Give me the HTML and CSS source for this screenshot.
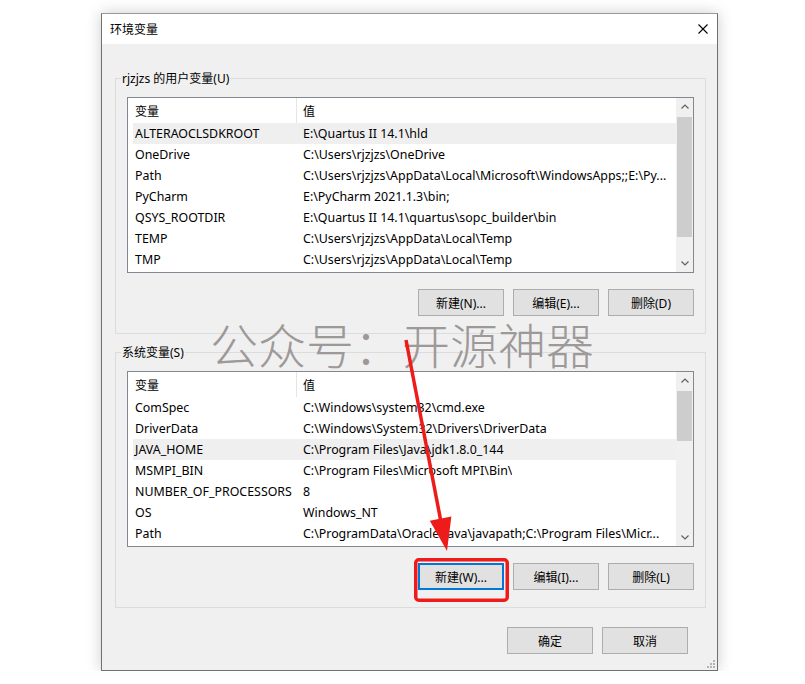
FILE: index.html
```html
<!DOCTYPE html>
<html lang="zh-CN">
<head>
    <meta charset="UTF-8">
    <title>环境变量</title>
    <link rel="stylesheet" href="styles.css">
</head>
<body>
    <div class="window">
        <div class="titlebar">
            <span>环境变量</span>
            <svg class="close" width="10" height="10" viewBox="0 0 10 10">
                <path d="M0.5 0.5 L9.5 9.5 M9.5 0.5 L0.5 9.5" stroke="#000" stroke-width="1.1" fill="none"/>
            </svg>
        </div>

        <div class="client">
            <!-- user variables -->
            <div class="group">
                <span class="group-label">rjzjzs 的用户变量(U)</span>
                <div class="listview">
                    <div class="grid">
                        <div class="head"><span class="c1">变量</span><span class="c2">值</span></div>
                        <div class="row sel"><span class="c1">ALTERAOCLSDKROOT</span><span class="c2">E:\Quartus II 14.1\hld</span></div>
                        <div class="row"><span class="c1">OneDrive</span><span class="c2">C:\Users\rjzjzs\OneDrive</span></div>
                        <div class="row"><span class="c1">Path</span><span class="c2">C:\Users\rjzjzs\AppData\Local\Microsoft\WindowsApps;;E:\Py...</span></div>
                        <div class="row"><span class="c1">PyCharm</span><span class="c2">E:\PyCharm 2021.1.3\bin;</span></div>
                        <div class="row"><span class="c1">QSYS_ROOTDIR</span><span class="c2">E:\Quartus II 14.1\quartus\sopc_builder\bin</span></div>
                        <div class="row"><span class="c1">TEMP</span><span class="c2">C:\Users\rjzjzs\AppData\Local\Temp</span></div>
                        <div class="row"><span class="c1">TMP</span><span class="c2">C:\Users\rjzjzs\AppData\Local\Temp</span></div>
                    </div>
                    <div class="scrollbar">
                        <div class="sb-arrow"><svg width="8" height="5" viewBox="0 0 8 5"><polyline points="0.5,4.5 4,1 7.5,4.5" fill="none" stroke="#606060" stroke-width="1.2"/></svg></div>
                        <div class="track"><div class="thumb thumb-user"></div></div>
                        <div class="sb-arrow"><svg width="8" height="5" viewBox="0 0 8 5"><polyline points="0.5,0.5 4,4 7.5,0.5" fill="none" stroke="#606060" stroke-width="1.2"/></svg></div>
                    </div>
                </div>
                <div class="buttons">
                    <button class="btn">新建(N)...</button>
                    <button class="btn">编辑(E)...</button>
                    <button class="btn">删除(D)</button>
                </div>
            </div>

            <!-- system variables -->
            <div class="group">
                <span class="group-label">系统变量(S)</span>
                <div class="listview">
                    <div class="grid">
                        <div class="head"><span class="c1">变量</span><span class="c2">值</span></div>
                        <div class="row"><span class="c1">ComSpec</span><span class="c2">C:\Windows\system32\cmd.exe</span></div>
                        <div class="row"><span class="c1">DriverData</span><span class="c2">C:\Windows\System32\Drivers\DriverData</span></div>
                        <div class="row sel"><span class="c1">JAVA_HOME</span><span class="c2">C:\Program Files\Java\jdk1.8.0_144</span></div>
                        <div class="row"><span class="c1">MSMPI_BIN</span><span class="c2">C:\Program Files\Microsoft MPI\Bin\</span></div>
                        <div class="row"><span class="c1">NUMBER_OF_PROCESSORS</span><span class="c2">8</span></div>
                        <div class="row"><span class="c1">OS</span><span class="c2">Windows_NT</span></div>
                        <div class="row"><span class="c1">Path</span><span class="c2">C:\ProgramData\Oracle\Java\javapath;C:\Program Files\Micr...</span></div>
                    </div>
                    <div class="scrollbar">
                        <div class="sb-arrow"><svg width="8" height="5" viewBox="0 0 8 5"><polyline points="0.5,4.5 4,1 7.5,4.5" fill="none" stroke="#606060" stroke-width="1.2"/></svg></div>
                        <div class="track"><div class="thumb thumb-sys"></div></div>
                        <div class="sb-arrow"><svg width="8" height="5" viewBox="0 0 8 5"><polyline points="0.5,0.5 4,4 7.5,0.5" fill="none" stroke="#606060" stroke-width="1.2"/></svg></div>
                    </div>
                </div>
                <div class="buttons">
                    <button class="btn focused">新建(W)...</button>
                    <button class="btn">编辑(I)...</button>
                    <button class="btn">删除(L)</button>
                </div>
            </div>

            <div class="dialog-buttons">
                <button class="btn">确定</button>
                <button class="btn">取消</button>
            </div>
        </div>

        <svg class="grip" width="10" height="10" viewBox="0 0 10 10">
            <rect x="7" y="1" width="2" height="2" fill="#b4b4b4"/>
            <rect x="4" y="4" width="2" height="2" fill="#b4b4b4"/>
            <rect x="7" y="4" width="2" height="2" fill="#b4b4b4"/>
            <rect x="1" y="7" width="2" height="2" fill="#b4b4b4"/>
            <rect x="4" y="7" width="2" height="2" fill="#b4b4b4"/>
            <rect x="7" y="7" width="2" height="2" fill="#b4b4b4"/>
        </svg>
    </div>

    <div class="watermark">公众号：开源神器</div>

    <!-- red annotation on top of the screenshot -->
    <svg class="annotation" width="805" height="684" viewBox="0 0 805 684">
        <line x1="406" y1="340" x2="441" y2="522" stroke="#ee1b1b" stroke-width="3.5"/>
        <polygon points="447,551 429.8,520.7 451.4,516.5" fill="#ee1b1b"/>
        <rect x="415.75" y="559.75" width="91.5" height="40.5" rx="3" fill="none" stroke="#ee1b1b" stroke-width="3.5"/>
    </svg>
</body>
</html>
```

FILE: styles.css
```css
body {
    margin: 0;
    background: #fff;
    font-family: "Noto Sans", "Noto Sans CJK SC", sans-serif;
    font-size: 12px;
    color: #000;
}
.window {
    position: relative;
    width: 617px;
    height: 658px;
    margin: 13px 0 0 101px;
    box-sizing: border-box;
    border: 1px solid #707070;
    border-top-color: #9a9a9a;
    box-shadow: 0 0 14px rgba(0, 0, 0, 0.2);
    background: #f0f0f0;
    display: flex;
    flex-direction: column;
}
.titlebar {
    height: 30px;
    box-sizing: border-box;
    padding: 0 9px 2px 8px;
    background: #fff;
    display: flex;
    align-items: center;
    justify-content: space-between;
    font-family: "Noto Sans CJK SC", sans-serif;
}
.close {
    margin-top: 2px;
}
.client {
    flex: 1;
    padding: 34px 11px 0 13px;
}
.group {
    position: relative;
    border: 1px solid #dcdcdc;
    padding: 18px 11px 17px 11px;
}
.group + .group {
    margin-top: 18px;
}
.group-label {
    position: absolute;
    top: -9px;
    left: 5px;
    padding: 0 1px;
    line-height: 17px;
    background: #f0f0f0;
}
.listview {
    display: flex;
    height: 176px;
    box-sizing: border-box;
    border: 1px solid #828790;
    background: #fff;
}
.grid {
    flex: 1;
    min-width: 0;
    padding-left: 5px;
    overflow: hidden;
}
.head {
    display: flex;
    height: 25px;
}
.head .c1 {
    width: 164px;
    box-sizing: border-box;
    border-right: 1px solid #e5e5e5;
    padding-left: 2px;
    display: flex;
    align-items: center;
}
.head .c2 {
    padding-left: 6px;
    display: flex;
    align-items: center;
}
.row {
    display: flex;
    align-items: center;
    height: 21px;
    font-size: 12.4px;
    white-space: nowrap;
}
.row.sel {
    background: #efefef;
}
.row .c1 {
    flex: none;
    width: 168px;
    box-sizing: border-box;
    padding-left: 2px;
}
.row .c2 {
    padding-left: 2px;
    overflow: hidden;
}
.scrollbar {
    flex: none;
    width: 17px;
    background: #f0f0f0;
    display: flex;
    flex-direction: column;
}
.sb-arrow {
    height: 17px;
    display: flex;
    align-items: center;
    justify-content: center;
}
.track {
    flex: 1;
}
.thumb {
    margin: 2px 1px 0;
    background: #cdcdcd;
}
.thumb-user {
    height: 120px;
}
.thumb-sys {
    height: 50px;
}
.buttons {
    display: flex;
    justify-content: flex-end;
    gap: 9px;
    margin-top: 16px;
}
.btn {
    width: 86px;
    height: 27px;
    box-sizing: border-box;
    padding: 0;
    background: #e1e1e1;
    border: 1px solid #adadad;
    font: inherit;
    color: #000;
}
.btn.focused {
    border: 2px solid #0078d7;
}
.dialog-buttons {
    display: flex;
    justify-content: flex-end;
    gap: 9px;
    margin-top: 19px;
    padding-right: 18px;
}
.grip {
    position: absolute;
    right: 1px;
    bottom: 1px;
}
.watermark {
    position: absolute;
    left: 210px;
    top: 319px;
    font-family: "Noto Sans CJK SC", sans-serif;
    font-size: 48px;
    font-weight: 300;
    line-height: 1;
    color: #9e9999;
    white-space: nowrap;
}
.annotation {
    position: absolute;
    top: 0;
    left: 0;
}
```
